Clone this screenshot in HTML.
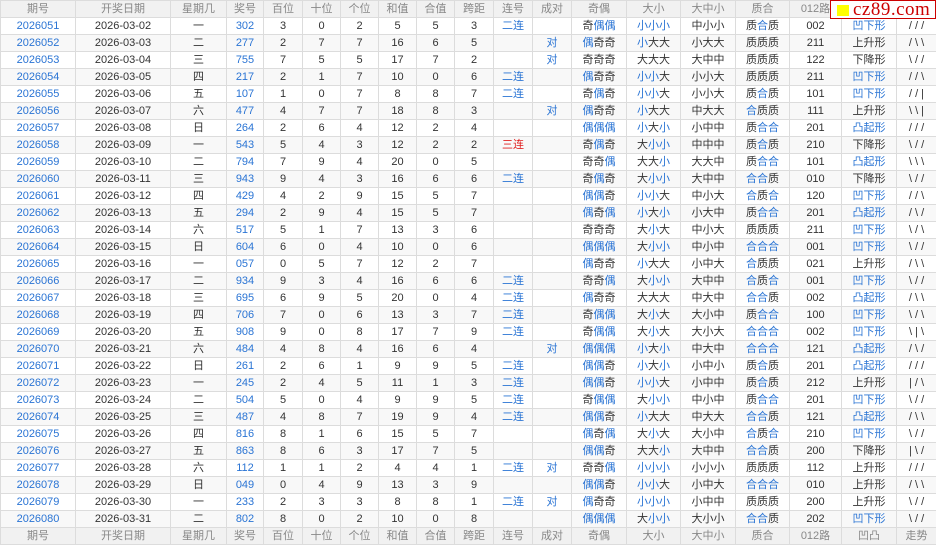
<!DOCTYPE html>
<html><head><meta charset="utf-8"><style>
html,body{margin:0;padding:0;background:#fff;width:936px;height:545px;overflow:hidden}
table{border-collapse:collapse;table-layout:fixed;width:936px;font-family:"Liberation Sans","Noto Sans CJK SC",sans-serif;font-size:11px;color:#333}
td,th{border:1px solid #dcdcdc;height:16px;padding:0;text-align:center;line-height:16px;white-space:nowrap;overflow:hidden;font-weight:normal}
th{background:#f1f1f1;color:#888}
tr:nth-child(odd) td{background:#f8f8f8}
b{font-weight:normal;color:#2a74d4}
.r{color:#e02020}
.logo{position:absolute;left:830px;top:0;width:104px;height:19px;background:#fff;border:1px solid #c00;box-sizing:border-box;width:106px}
.logo i{position:absolute;left:6px;top:4px;width:12px;height:11px;background:#ff0}
.logo span{position:absolute;left:22px;top:-2px;font-family:"Liberation Serif",serif;font-size:19px;color:#c00;letter-spacing:0.5px}
</style></head><body>
<div class="logo"><i></i><span>cz89.com</span></div>
<table>
<colgroup><col style="width:75px"><col style="width:95px"><col style="width:56px"><col style="width:37px"><col style="width:39px"><col style="width:38px"><col style="width:38px"><col style="width:38px"><col style="width:38px"><col style="width:39px"><col style="width:39px"><col style="width:39px"><col style="width:55px"><col style="width:54px"><col style="width:55px"><col style="width:54px"><col style="width:52px"><col style="width:55px"><col style="width:40px"></colgroup>
<tr><th>期号</th><th>开奖日期</th><th>星期几</th><th>奖号</th><th>百位</th><th>十位</th><th>个位</th><th>和值</th><th>合值</th><th>跨距</th><th>连号</th><th>成对</th><th>奇偶</th><th>大小</th><th>大中小</th><th>质合</th><th>012路</th><th>凹凸</th><th>走势</th></tr>
<tr><td><b>2026051</b></td><td>2026-03-02</td><td>一</td><td><b>302</b></td><td>3</td><td>0</td><td>2</td><td>5</td><td>5</td><td>3</td><td><b>二连</b></td><td></td><td>奇<b>偶偶</b></td><td><b>小小小</b></td><td>中小小</td><td>质<b>合</b>质</td><td>002</td><td><b>凹下形</b></td><td>/ / /</td></tr>
<tr><td><b>2026052</b></td><td>2026-03-03</td><td>二</td><td><b>277</b></td><td>2</td><td>7</td><td>7</td><td>16</td><td>6</td><td>5</td><td></td><td><b>对</b></td><td><b>偶</b>奇奇</td><td><b>小</b>大大</td><td>小大大</td><td>质质质</td><td>211</td><td>上升形</td><td>/ \ \</td></tr>
<tr><td><b>2026053</b></td><td>2026-03-04</td><td>三</td><td><b>755</b></td><td>7</td><td>5</td><td>5</td><td>17</td><td>7</td><td>2</td><td></td><td><b>对</b></td><td>奇奇奇</td><td>大大大</td><td>大中中</td><td>质质质</td><td>122</td><td>下降形</td><td>\ / /</td></tr>
<tr><td><b>2026054</b></td><td>2026-03-05</td><td>四</td><td><b>217</b></td><td>2</td><td>1</td><td>7</td><td>10</td><td>0</td><td>6</td><td><b>二连</b></td><td></td><td><b>偶</b>奇奇</td><td><b>小小</b>大</td><td>小小大</td><td>质质质</td><td>211</td><td><b>凹下形</b></td><td>/ / \</td></tr>
<tr><td><b>2026055</b></td><td>2026-03-06</td><td>五</td><td><b>107</b></td><td>1</td><td>0</td><td>7</td><td>8</td><td>8</td><td>7</td><td><b>二连</b></td><td></td><td>奇<b>偶</b>奇</td><td><b>小小</b>大</td><td>小小大</td><td>质<b>合</b>质</td><td>101</td><td><b>凹下形</b></td><td>/ / |</td></tr>
<tr><td><b>2026056</b></td><td>2026-03-07</td><td>六</td><td><b>477</b></td><td>4</td><td>7</td><td>7</td><td>18</td><td>8</td><td>3</td><td></td><td><b>对</b></td><td><b>偶</b>奇奇</td><td><b>小</b>大大</td><td>中大大</td><td><b>合</b>质质</td><td>111</td><td>上升形</td><td>\ \ |</td></tr>
<tr><td><b>2026057</b></td><td>2026-03-08</td><td>日</td><td><b>264</b></td><td>2</td><td>6</td><td>4</td><td>12</td><td>2</td><td>4</td><td></td><td></td><td><b>偶偶偶</b></td><td><b>小</b>大<b>小</b></td><td>小中中</td><td>质<b>合合</b></td><td>201</td><td><b>凸起形</b></td><td>/ / /</td></tr>
<tr><td><b>2026058</b></td><td>2026-03-09</td><td>一</td><td><b>543</b></td><td>5</td><td>4</td><td>3</td><td>12</td><td>2</td><td>2</td><td class="r">三连</td><td></td><td>奇<b>偶</b>奇</td><td>大<b>小小</b></td><td>中中中</td><td>质<b>合</b>质</td><td>210</td><td>下降形</td><td>\ / /</td></tr>
<tr><td><b>2026059</b></td><td>2026-03-10</td><td>二</td><td><b>794</b></td><td>7</td><td>9</td><td>4</td><td>20</td><td>0</td><td>5</td><td></td><td></td><td>奇奇<b>偶</b></td><td>大大<b>小</b></td><td>大大中</td><td>质<b>合合</b></td><td>101</td><td><b>凸起形</b></td><td>\ \ \</td></tr>
<tr><td><b>2026060</b></td><td>2026-03-11</td><td>三</td><td><b>943</b></td><td>9</td><td>4</td><td>3</td><td>16</td><td>6</td><td>6</td><td><b>二连</b></td><td></td><td>奇<b>偶</b>奇</td><td>大<b>小小</b></td><td>大中中</td><td><b>合合</b>质</td><td>010</td><td>下降形</td><td>\ / /</td></tr>
<tr><td><b>2026061</b></td><td>2026-03-12</td><td>四</td><td><b>429</b></td><td>4</td><td>2</td><td>9</td><td>15</td><td>5</td><td>7</td><td></td><td></td><td><b>偶偶</b>奇</td><td><b>小小</b>大</td><td>中小大</td><td><b>合</b>质<b>合</b></td><td>120</td><td><b>凹下形</b></td><td>/ / \</td></tr>
<tr><td><b>2026062</b></td><td>2026-03-13</td><td>五</td><td><b>294</b></td><td>2</td><td>9</td><td>4</td><td>15</td><td>5</td><td>7</td><td></td><td></td><td><b>偶</b>奇<b>偶</b></td><td><b>小</b>大<b>小</b></td><td>小大中</td><td>质<b>合合</b></td><td>201</td><td><b>凸起形</b></td><td>/ \ /</td></tr>
<tr><td><b>2026063</b></td><td>2026-03-14</td><td>六</td><td><b>517</b></td><td>5</td><td>1</td><td>7</td><td>13</td><td>3</td><td>6</td><td></td><td></td><td>奇奇奇</td><td>大<b>小</b>大</td><td>中小大</td><td>质质质</td><td>211</td><td><b>凹下形</b></td><td>\ / \</td></tr>
<tr><td><b>2026064</b></td><td>2026-03-15</td><td>日</td><td><b>604</b></td><td>6</td><td>0</td><td>4</td><td>10</td><td>0</td><td>6</td><td></td><td></td><td><b>偶偶偶</b></td><td>大<b>小小</b></td><td>中小中</td><td><b>合合合</b></td><td>001</td><td><b>凹下形</b></td><td>\ / /</td></tr>
<tr><td><b>2026065</b></td><td>2026-03-16</td><td>一</td><td><b>057</b></td><td>0</td><td>5</td><td>7</td><td>12</td><td>2</td><td>7</td><td></td><td></td><td><b>偶</b>奇奇</td><td><b>小</b>大大</td><td>小中大</td><td><b>合</b>质质</td><td>021</td><td>上升形</td><td>/ \ \</td></tr>
<tr><td><b>2026066</b></td><td>2026-03-17</td><td>二</td><td><b>934</b></td><td>9</td><td>3</td><td>4</td><td>16</td><td>6</td><td>6</td><td><b>二连</b></td><td></td><td>奇奇<b>偶</b></td><td>大<b>小小</b></td><td>大中中</td><td><b>合</b>质<b>合</b></td><td>001</td><td><b>凹下形</b></td><td>\ / /</td></tr>
<tr><td><b>2026067</b></td><td>2026-03-18</td><td>三</td><td><b>695</b></td><td>6</td><td>9</td><td>5</td><td>20</td><td>0</td><td>4</td><td><b>二连</b></td><td></td><td><b>偶</b>奇奇</td><td>大大大</td><td>中大中</td><td><b>合合</b>质</td><td>002</td><td><b>凸起形</b></td><td>/ \ \</td></tr>
<tr><td><b>2026068</b></td><td>2026-03-19</td><td>四</td><td><b>706</b></td><td>7</td><td>0</td><td>6</td><td>13</td><td>3</td><td>7</td><td><b>二连</b></td><td></td><td>奇<b>偶偶</b></td><td>大<b>小</b>大</td><td>大小中</td><td>质<b>合合</b></td><td>100</td><td><b>凹下形</b></td><td>\ / \</td></tr>
<tr><td><b>2026069</b></td><td>2026-03-20</td><td>五</td><td><b>908</b></td><td>9</td><td>0</td><td>8</td><td>17</td><td>7</td><td>9</td><td><b>二连</b></td><td></td><td>奇<b>偶偶</b></td><td>大<b>小</b>大</td><td>大小大</td><td><b>合合合</b></td><td>002</td><td><b>凹下形</b></td><td>\ | \</td></tr>
<tr><td><b>2026070</b></td><td>2026-03-21</td><td>六</td><td><b>484</b></td><td>4</td><td>8</td><td>4</td><td>16</td><td>6</td><td>4</td><td></td><td><b>对</b></td><td><b>偶偶偶</b></td><td><b>小</b>大<b>小</b></td><td>中大中</td><td><b>合合合</b></td><td>121</td><td><b>凸起形</b></td><td>/ \ /</td></tr>
<tr><td><b>2026071</b></td><td>2026-03-22</td><td>日</td><td><b>261</b></td><td>2</td><td>6</td><td>1</td><td>9</td><td>9</td><td>5</td><td><b>二连</b></td><td></td><td><b>偶偶</b>奇</td><td><b>小</b>大<b>小</b></td><td>小中小</td><td>质<b>合</b>质</td><td>201</td><td><b>凸起形</b></td><td>/ / /</td></tr>
<tr><td><b>2026072</b></td><td>2026-03-23</td><td>一</td><td><b>245</b></td><td>2</td><td>4</td><td>5</td><td>11</td><td>1</td><td>3</td><td><b>二连</b></td><td></td><td><b>偶偶</b>奇</td><td><b>小小</b>大</td><td>小中中</td><td>质<b>合</b>质</td><td>212</td><td>上升形</td><td>| / \</td></tr>
<tr><td><b>2026073</b></td><td>2026-03-24</td><td>二</td><td><b>504</b></td><td>5</td><td>0</td><td>4</td><td>9</td><td>9</td><td>5</td><td><b>二连</b></td><td></td><td>奇<b>偶偶</b></td><td>大<b>小小</b></td><td>中小中</td><td>质<b>合合</b></td><td>201</td><td><b>凹下形</b></td><td>\ / /</td></tr>
<tr><td><b>2026074</b></td><td>2026-03-25</td><td>三</td><td><b>487</b></td><td>4</td><td>8</td><td>7</td><td>19</td><td>9</td><td>4</td><td><b>二连</b></td><td></td><td><b>偶偶</b>奇</td><td><b>小</b>大大</td><td>中大大</td><td><b>合合</b>质</td><td>121</td><td><b>凸起形</b></td><td>/ \ \</td></tr>
<tr><td><b>2026075</b></td><td>2026-03-26</td><td>四</td><td><b>816</b></td><td>8</td><td>1</td><td>6</td><td>15</td><td>5</td><td>7</td><td></td><td></td><td><b>偶</b>奇<b>偶</b></td><td>大<b>小</b>大</td><td>大小中</td><td><b>合</b>质<b>合</b></td><td>210</td><td><b>凹下形</b></td><td>\ / /</td></tr>
<tr><td><b>2026076</b></td><td>2026-03-27</td><td>五</td><td><b>863</b></td><td>8</td><td>6</td><td>3</td><td>17</td><td>7</td><td>5</td><td></td><td></td><td><b>偶偶</b>奇</td><td>大大<b>小</b></td><td>大中中</td><td><b>合合</b>质</td><td>200</td><td>下降形</td><td>| \ /</td></tr>
<tr><td><b>2026077</b></td><td>2026-03-28</td><td>六</td><td><b>112</b></td><td>1</td><td>1</td><td>2</td><td>4</td><td>4</td><td>1</td><td><b>二连</b></td><td><b>对</b></td><td>奇奇<b>偶</b></td><td><b>小小小</b></td><td>小小小</td><td>质质质</td><td>112</td><td>上升形</td><td>/ / /</td></tr>
<tr><td><b>2026078</b></td><td>2026-03-29</td><td>日</td><td><b>049</b></td><td>0</td><td>4</td><td>9</td><td>13</td><td>3</td><td>9</td><td></td><td></td><td><b>偶偶</b>奇</td><td><b>小小</b>大</td><td>小中大</td><td><b>合合合</b></td><td>010</td><td>上升形</td><td>/ \ \</td></tr>
<tr><td><b>2026079</b></td><td>2026-03-30</td><td>一</td><td><b>233</b></td><td>2</td><td>3</td><td>3</td><td>8</td><td>8</td><td>1</td><td><b>二连</b></td><td><b>对</b></td><td><b>偶</b>奇奇</td><td><b>小小小</b></td><td>小中中</td><td>质质质</td><td>200</td><td>上升形</td><td>\ / /</td></tr>
<tr><td><b>2026080</b></td><td>2026-03-31</td><td>二</td><td><b>802</b></td><td>8</td><td>0</td><td>2</td><td>10</td><td>0</td><td>8</td><td></td><td></td><td><b>偶偶偶</b></td><td>大<b>小小</b></td><td>大小小</td><td><b>合合</b>质</td><td>202</td><td><b>凹下形</b></td><td>\ / /</td></tr>
<tr><th>期号</th><th>开奖日期</th><th>星期几</th><th>奖号</th><th>百位</th><th>十位</th><th>个位</th><th>和值</th><th>合值</th><th>跨距</th><th>连号</th><th>成对</th><th>奇偶</th><th>大小</th><th>大中小</th><th>质合</th><th>012路</th><th>凹凸</th><th>走势</th></tr>
</table>
</body></html>
